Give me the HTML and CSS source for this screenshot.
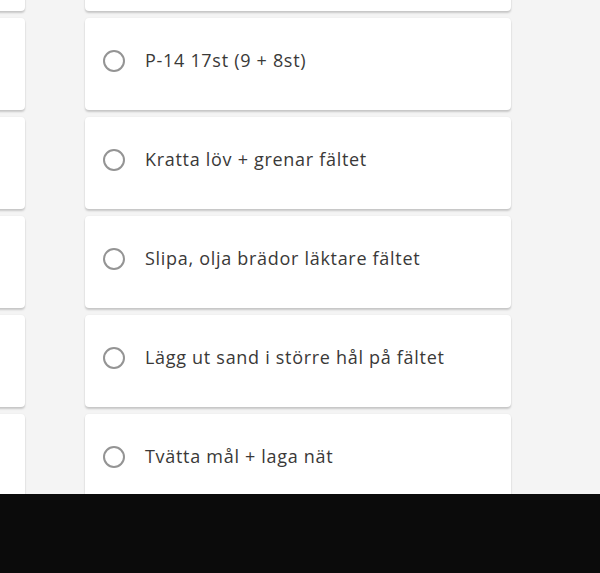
FILE: index.html
```html
<!DOCTYPE html>
<html lang="sv">
<head>
<meta charset="utf-8">
<title>Uppgifter</title>
<link rel="stylesheet" href="styles.css">
</head>
<body>
<div class="app">
  <div class="board">
    <div class="column">
      <div class="card"></div>
      <div class="card"></div>
      <div class="card"></div>
      <div class="card"></div>
      <div class="card"></div>
      <div class="card"></div>
    </div>
    <div class="column">
      <div class="card"></div>
      <div class="card"><span class="radio"></span><span class="title">P-14 17st (9 + 8st)</span></div>
      <div class="card"><span class="radio"></span><span class="title">Kratta löv + grenar fältet</span></div>
      <div class="card"><span class="radio"></span><span class="title">Slipa, olja brädor läktare fältet</span></div>
      <div class="card"><span class="radio"></span><span class="title">Lägg ut sand i större hål på fältet</span></div>
      <div class="card"><span class="radio"></span><span class="title">Tvätta mål + laga nät</span></div>
    </div>
  </div>
</div>
<div class="footer"></div>
</body>
</html>
```

FILE: styles.css
```css
* { box-sizing: border-box; }
html, body { margin: 0; padding: 0; }
body {
  width: 600px;
  height: 573px;
  overflow: hidden;
  background: #0b0b0b;
  font-family: "Open Sans", "Noto Sans", sans-serif;
}
.app {
  height: 494px;
  overflow: hidden;
  background: #f4f4f4;
}
.board {
  display: flex;
  gap: 60px;
  margin-left: -401px;
}
.column {
  width: 426px;
  flex: none;
  display: flex;
  flex-direction: column;
  gap: 7px;
  margin-top: -81px;
}
.card {
  height: 92px;
  flex: none;
  background: #fff;
  border-radius: 4px;
  box-shadow: 0 2px 2px rgba(0,0,0,0.18), 0 0 2px rgba(0,0,0,0.06);
  display: flex;
  align-items: center;
  align-self: stretch;
  padding: 0 0 8px 18px;
}
.radio {
  width: 22px;
  height: 22px;
  flex: none;
  border: 2px solid #949494;
  border-radius: 50%;
  margin-top: 2px;
}
.title {
  margin-left: 20px;
  font-size: 18px;
  letter-spacing: 0.7px;
  color: #3a3938;
  line-height: 22px;
  white-space: nowrap;
}
.footer {
  height: 79px;
  background: #0b0b0b;
}
```
